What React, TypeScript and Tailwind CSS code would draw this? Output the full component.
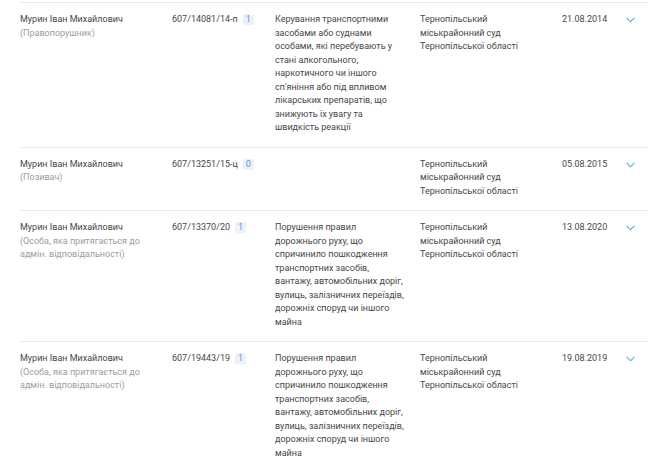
import React from "react";

type Row = {
  name: string;
  role: string;
  caseNo: string;
  count: string;
  desc: string;
  court: string;
  date: string;
};

const rows: Row[] = [
  {
    name: "Мурин Іван Михайлович",
    role: "(Правопорушник)",
    caseNo: "607/14081/14-п",
    count: "1",
    desc: "Керування транспортними засобами або суднами особами, які перебувають у стані алкогольного, наркотичного чи іншого сп'яніння або під впливом лікарських препаратів, що знижують їх увагу та швидкість реакції",
    court: "Тернопільський міськрайонний суд Тернопільської області",
    date: "21.08.2014",
  },
  {
    name: "Мурин Іван Михайлович",
    role: "(Позивач)",
    caseNo: "607/13251/15-ц",
    count: "0",
    desc: "",
    court: "Тернопільський міськрайонний суд Тернопільської області",
    date: "05.08.2015",
  },
  {
    name: "Мурин Іван Михайлович",
    role: "(Особа, яка притягається до адмін. відповідальності)",
    caseNo: "607/13370/20",
    count: "1",
    desc: "Порушення правил дорожнього руху, що спричинило пошкодження транспортних засобів, вантажу, автомобільних доріг, вулиць, залізничних переїздів, дорожніх споруд чи іншого майна",
    court: "Тернопільський міськрайонний суд Тернопільської області",
    date: "13.08.2020",
  },
  {
    name: "Мурин Іван Михайлович",
    role: "(Особа, яка притягається до адмін. відповідальності)",
    caseNo: "607/19443/19",
    count: "1",
    desc: "Порушення правил дорожнього руху, що спричинило пошкодження транспортних засобів, вантажу, автомобільних доріг, вулиць, залізничних переїздів, дорожніх споруд чи іншого майна",
    court: "Тернопільський міськрайонний суд Тернопільської області",
    date: "19.08.2019",
  },
];

function Chevron() {
  return (
    <svg width="9" height="6" viewBox="0 0 9 6" className="mt-[4px]">
      <path d="M0.6 0.8 L4.5 4.8 L8.4 0.8" fill="none" stroke="#5aa9e0" strokeWidth="1.1" />
    </svg>
  );
}

export default function App() {
  return (
    <div
      className="w-[665px] h-[460px] overflow-hidden bg-white pt-[2px]"
      style={{ fontFamily: "Roboto, 'Liberation Sans', sans-serif" }}
    >
      <div className="ml-[20px] w-[628px] border-t border-[#ebebeb]">
        {rows.map((r, i) => (
          <div
            key={i}
            className="grid grid-cols-[152px_103px_145px_142px_64px_1fr] pt-[10px] pb-[12px] border-b border-[#ebebeb] text-[9px] leading-[13.5px] text-[#474747]"
          >
            <div className="pr-[16px]">
              <div>{r.name}</div>
              <div className="text-[#9d9d9d]">{r.role}</div>
            </div>
            <div className="flex items-start gap-[5px]">
              <span>{r.caseNo}</span>
              <span className="mt-[1px] flex h-[11px] w-[11px] items-center justify-center rounded-[2px] bg-[#eef1f8] text-[9px] leading-none text-[#5b93dc]">
                {r.count}
              </span>
            </div>
            <div className="pr-[14px]">{r.desc}</div>
            <div className="pr-[20px]">{r.court}</div>
            <div>{r.date}</div>
            <div>
              <Chevron />
            </div>
          </div>
        ))}
      </div>
    </div>
  );
}
